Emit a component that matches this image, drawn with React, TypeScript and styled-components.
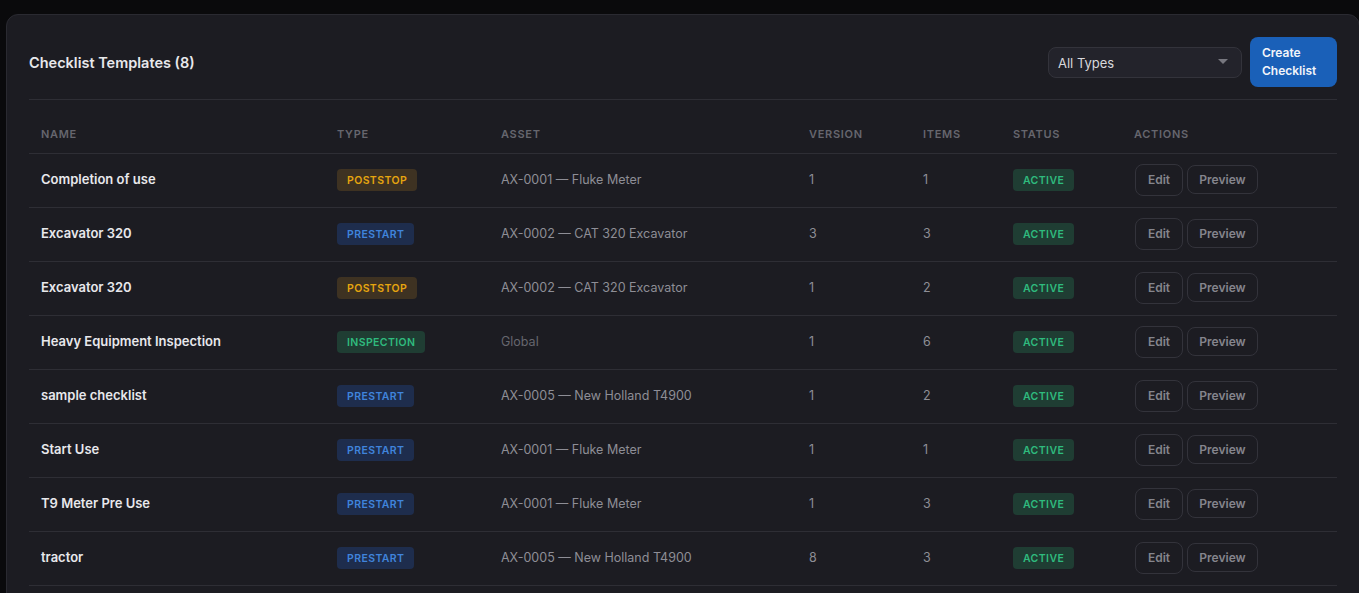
import React from 'react';
import styled, { createGlobalStyle } from 'styled-components';

type BadgeKind = 'poststop' | 'prestart' | 'inspection' | 'active';

interface Template {
  name: string;
  type: 'poststop' | 'prestart' | 'inspection';
  asset: string;
  version: number;
  items: number;
}

const templates: Template[] = [
  { name: 'Completion of use', type: 'poststop', asset: 'AX-0001 — Fluke Meter', version: 1, items: 1 },
  { name: 'Excavator 320', type: 'prestart', asset: 'AX-0002 — CAT 320 Excavator', version: 3, items: 3 },
  { name: 'Excavator 320', type: 'poststop', asset: 'AX-0002 — CAT 320 Excavator', version: 1, items: 2 },
  { name: 'Heavy Equipment Inspection', type: 'inspection', asset: 'Global', version: 1, items: 6 },
  { name: 'sample checklist', type: 'prestart', asset: 'AX-0005 — New Holland T4900', version: 1, items: 2 },
  { name: 'Start Use', type: 'prestart', asset: 'AX-0001 — Fluke Meter', version: 1, items: 1 },
  { name: 'T9 Meter Pre Use', type: 'prestart', asset: 'AX-0001 — Fluke Meter', version: 1, items: 3 },
  { name: 'tractor', type: 'prestart', asset: 'AX-0005 — New Holland T4900', version: 8, items: 3 },
];

const columns = [
  { label: 'Name', width: 296 },
  { label: 'Type', width: 164 },
  { label: 'Asset', width: 308 },
  { label: 'Version', width: 114 },
  { label: 'Items', width: 90 },
  { label: 'Status', width: 121 },
  { label: 'Actions', width: 215 },
];

const badgeColors: Record<BadgeKind, { bg: string; fg: string }> = {
  poststop: { bg: '#3e3222', fg: '#e6a50f' },
  prestart: { bg: '#1e2d4d', fg: '#4084dc' },
  inspection: { bg: '#1f3d33', fg: '#2fbb7e' },
  active: { bg: '#1f3d33', fg: '#2fbb7e' },
};

const App = () => {
  return (
    <>
      <GlobalStyle />
      <Page>
        <Panel>
          <Header>
            <Title>Checklist Templates (8)</Title>
            <Controls>
              <TypeSelect>
                <span>All Types</span>
                <Caret />
              </TypeSelect>
              <CreateBtn>Create Checklist</CreateBtn>
            </Controls>
          </Header>
          <Table>
            <colgroup>
              {columns.map((col) => (
                <col key={col.label} width={col.width} />
              ))}
            </colgroup>
            <thead>
              <tr>
                {columns.map((col) => (
                  <HeadCell key={col.label}>{col.label}</HeadCell>
                ))}
              </tr>
            </thead>
            <tbody>
              {templates.map((t) => (
                <tr key={t.name + t.type}>
                  <NameCell>{t.name}</NameCell>
                  <Cell>
                    <Badge $kind={t.type}>{t.type}</Badge>
                  </Cell>
                  <TextCell $muted={t.asset === 'Global'}>{t.asset}</TextCell>
                  <TextCell>{t.version}</TextCell>
                  <TextCell>{t.items}</TextCell>
                  <Cell>
                    <Badge $kind="active">active</Badge>
                  </Cell>
                  <Cell>
                    <Actions>
                      <EditBtn>Edit</EditBtn>
                      <PreviewBtn>Preview</PreviewBtn>
                    </Actions>
                  </Cell>
                </tr>
              ))}
            </tbody>
          </Table>
        </Panel>
      </Page>
    </>
  );
};

const GlobalStyle = createGlobalStyle`
  html, body {
    margin: 0;
    padding: 0;
    height: 100%;
    overflow: hidden;
    background-color: #0a0a0c;
  }
  body, button {
    font-family: Inter, "Liberation Sans", sans-serif;
  }
`;

const Page = styled.div`
  padding: 14px 0 0 6px;
  width: 1360px;
  box-sizing: border-box;
`;

const Panel = styled.div`
  box-sizing: border-box;
  padding: 22px 22px 22px;
  background-color: #1c1c22;
  border: 1px solid #2a2a31;
  border-radius: 12px;
`;

const Header = styled.div`
  display: flex;
  justify-content: space-between;
  align-items: center;
  padding-bottom: 12px;
  border-bottom: 1px solid #2e2e35;
`;

const Title = styled.h2`
  margin: 0;
  font-size: 14.5px;
  font-weight: 600;
  color: #e8e8ec;
`;

const Controls = styled.div`
  display: flex;
  align-items: center;
  gap: 8px;
`;

const TypeSelect = styled.div`
  box-sizing: border-box;
  width: 194px;
  height: 31px;
  padding: 1px 10px 0 9px;
  display: flex;
  align-items: center;
  justify-content: space-between;
  background-color: #23232b;
  border: 1px solid #33333b;
  border-radius: 8px;
  font-size: 13px;
  color: #d8d8dc;
`;

const Caret = styled.i`
  width: 0;
  height: 0;
  margin: 0 3px 3px 0;
  border-left: 5px solid transparent;
  border-right: 5px solid transparent;
  border-top: 5px solid #77777f;
`;

const CreateBtn = styled.button`
  box-sizing: border-box;
  width: 87px;
  height: 50px;
  padding: 0 12px;
  text-align: left;
  line-height: 18px;
  font-size: 12px;
  font-weight: 600;
  color: #f2f5fa;
  background-color: #1a60b8;
  border: none;
  border-radius: 8px;
`;

const Table = styled.table`
  width: 100%;
  table-layout: fixed;
  border-collapse: collapse;
`;

const HeadCell = styled.th`
  height: 53px;
  padding: 16px 12px 0;
  box-sizing: border-box;
  text-align: left;
  font-size: 11px;
  font-weight: 600;
  letter-spacing: 0.7px;
  text-transform: uppercase;
  color: #66666e;
  border-bottom: 1px solid #2e2e35;
`;

const Cell = styled.td`
  height: 54px;
  padding: 0 12px;
  box-sizing: border-box;
  font-size: 12.5px;
  color: #8e8e96;
  border-bottom: 1px solid #2e2e35;
`;

const TextCell = styled(Cell)<{ $muted?: boolean }>`
  padding-bottom: 2px;
  color: ${({ $muted }) => ($muted ? '#66666e' : '#8e8e96')};
`;

const NameCell = styled(TextCell)`
  font-size: 13px;
  font-weight: 600;
  color: #e8e8ec;
`;

const Badge = styled.span<{ $kind: BadgeKind }>`
  display: inline-block;
  padding: 0 10px;
  height: 22px;
  line-height: 23px;
  border-radius: 4px;
  font-size: 10.5px;
  font-weight: 600;
  letter-spacing: 0.4px;
  text-transform: uppercase;
  vertical-align: middle;
  background-color: ${({ $kind }) => badgeColors[$kind].bg};
  color: ${({ $kind }) => badgeColors[$kind].fg};
`;

const Actions = styled.div`
  display: flex;
  align-items: center;
  gap: 4px;
  margin-left: 1px;
`;

const EditBtn = styled.button`
  box-sizing: border-box;
  width: 48px;
  height: 32px;
  padding: 0 0 2px;
  font-size: 12px;
  font-weight: 600;
  color: #85858d;
  background: transparent;
  border: 1px solid #33333b;
  border-radius: 8px;
`;

const PreviewBtn = styled(EditBtn)`
  width: 71px;
  height: 29px;
  margin-bottom: 1px;
  padding: 0 0 1px;
`;

export default App;
